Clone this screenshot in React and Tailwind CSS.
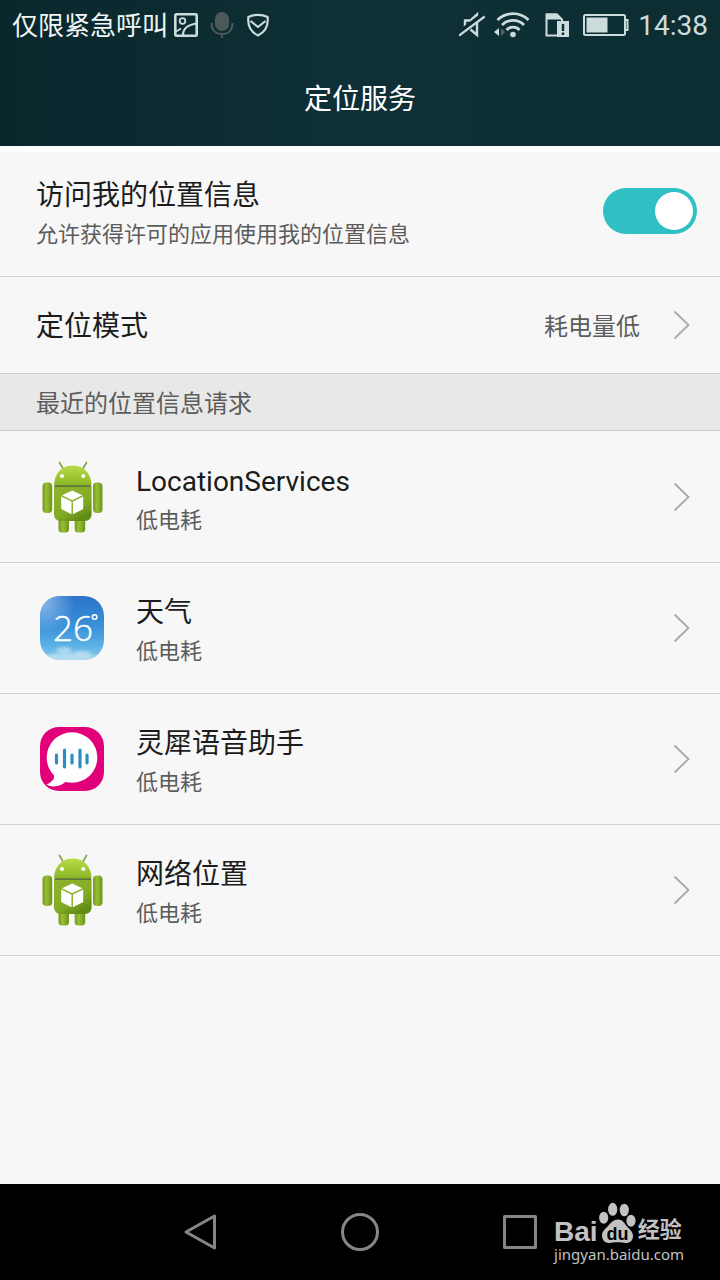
import { useState } from 'react';

const apps = [
  { name: 'LocationServices', usage: '低电耗', Icon: AndroidIcon },
  { name: '天气', usage: '低电耗', Icon: WeatherIcon },
  { name: '灵犀语音助手', usage: '低电耗', Icon: VoiceIcon },
  { name: '网络位置', usage: '低电耗', Icon: AndroidIcon },
];

function AndroidIcon() {
  return (
    <svg viewBox="0 0 72 72" className="size-18 shrink-0" aria-hidden="true">
      <defs>
        <linearGradient id="droidHead" x1="0" y1="0" x2="0" y2="1">
          <stop offset="0" stopColor="#b8dc48" />
          <stop offset="1" stopColor="#8db626" />
        </linearGradient>
        <linearGradient id="droidBody" x1="0" y1="0" x2="0.6" y2="1">
          <stop offset="0" stopColor="#8fb52c" />
          <stop offset="0.7" stopColor="#82ab24" />
          <stop offset="1" stopColor="#628b17" />
        </linearGradient>
        <linearGradient id="droidLimb" x1="0" y1="0" x2="1" y2="0">
          <stop offset="0" stopColor="#74991f" />
          <stop offset="0.4" stopColor="#97bf31" />
          <stop offset="1" stopColor="#6c9419" />
        </linearGradient>
      </defs>
      <path d="M23.5 1.5l4 7M50.5 1.5l-4 7" stroke="#8fa552" strokeWidth="1.8" strokeLinecap="round" />
      <rect x="22.5" y="52" width="10.5" height="19.5" rx="3.5" fill="url(#droidLimb)" />
      <rect x="38.7" y="52" width="10.5" height="19.5" rx="3.5" fill="url(#droidLimb)" />
      <rect x="6.5" y="21.5" width="9.7" height="30.5" rx="4" fill="url(#droidLimb)" />
      <rect x="57" y="21.5" width="9.5" height="30.5" rx="4" fill="url(#droidLimb)" />
      <path d="M18 25.500h37.600V53c0 4-2.500 7-6.600 7H24.600c-4 0-6.600-3-6.600-7z" fill="url(#droidBody)" />
      <path d="M18 24C18.500 12 26 4.500 36.800 4.500S55 12 55.600 24z" fill="url(#droidHead)" />
      <path d="M18.500 25h36.600" stroke="#3c5a0e" strokeWidth="1.3" />
      <circle cx="26" cy="15" r="2" fill="#fff" />
      <circle cx="47.3" cy="15" r="2" fill="#fff" />
      <path d="M36.2 29.6l10.200 4.700-10.200 5-10.200-5z" fill="#fff" />
      <path d="M25.200 35.500l10.300 5v12.800l-10.300-5.300zM47.200 35.500l-10.300 5v12.800l10.300-5.300z" fill="#fff" />
    </svg>
  );
}

function WeatherIcon() {
  return (
    <svg viewBox="-4 -4 72 72" className="size-18 shrink-0" aria-hidden="true">
      <defs>
        <linearGradient id="sky" x1="0" y1="0" x2="0" y2="1">
          <stop offset="0" stopColor="#2b72c8" />
          <stop offset="0.5" stopColor="#3b93da" />
          <stop offset="0.8" stopColor="#5fb3e6" />
          <stop offset="1" stopColor="#8fcbec" />
        </linearGradient>
        <radialGradient id="glow" cx="0.05" cy="0.1" r="0.5">
          <stop offset="0" stopColor="#9cc6ee" stopOpacity="0.8" />
          <stop offset="1" stopColor="#9cc6ee" stopOpacity="0" />
        </radialGradient>
        <clipPath id="weatherClip">
          <rect width="64" height="64" rx="20" />
        </clipPath>
        <filter id="cloudBlur">
          <feGaussianBlur stdDeviation="1.6" />
        </filter>
      </defs>
      <g clipPath="url(#weatherClip)">
        <rect width="64" height="64" fill="url(#sky)" />
        <rect width="64" height="64" fill="url(#glow)" />
        <g fill="#d9ecf6" filter="url(#cloudBlur)">
          <ellipse cx="24" cy="54" rx="8" ry="3" opacity="0.6" />
          <ellipse cx="42" cy="57" rx="9" ry="2.5" opacity="0.5" />
          <ellipse cx="30" cy="61" rx="26" ry="4" opacity="0.55" />
        </g>
      </g>
      <text x="13" y="45" fontSize="35" fontWeight="300" fill="#fff" stroke="#fff" strokeWidth="0.4" fontFamily="'Open Sans', 'Noto Sans', sans-serif">26</text>
      <circle cx="54.6" cy="21" r="2.3" fill="none" stroke="#fff" strokeWidth="1.5" />
    </svg>
  );
}

function VoiceIcon() {
  return (
    <svg viewBox="-4 -4 72 72" className="size-18 shrink-0" aria-hidden="true">
      <rect width="64" height="64" rx="19" fill="#e2007a" />
      <circle cx="32" cy="30.5" r="25.3" fill="#fff" />
      <path d="M14 46c1 5-1 9-7.500 11.500C12 61 21 59.500 26 54.500l6-3-10-8z" fill="#fff" />
      <g stroke="#2b8fc4" strokeWidth="3.2" strokeLinecap="round">
        <path d="M16.500 28v8M24.500 23v17M32 28v8M40 23v17M47 28v8" />
      </g>
    </svg>
  );
}

function Chevron() {
  return (
    <svg viewBox="0 0 18 30" className="h-[30px] w-[18px] shrink-0" fill="none" stroke="#a9a9a9" strokeWidth="1.8" aria-hidden="true">
      <path d="M1.500 1.500L15.500 15 1.500 28.500" />
    </svg>
  );
}

function StatusBar() {
  return (
    <div className="flex h-[50px] items-center justify-between px-3 text-[#ccdcdc]">
      <div className="flex items-center gap-[6px]">
        <span className="pt-0.5 text-[26px] leading-8 text-[#eef6f6]">仅限紧急呼叫</span>
        <svg viewBox="0 0 24 24" className="size-6" fill="none" stroke="currentColor" strokeWidth="2.6">
          <rect x="1.3" y="1.3" width="21.4" height="21.4" rx="1" />
          <circle cx="8.500" cy="8" r="2.8" strokeWidth="1.8" />
          <path d="M9 22c0-6 5-10.500 14-11.500" strokeWidth="2.2" />
          <path d="M2 18.500l5-3" strokeWidth="1.8" />
        </svg>
        <svg viewBox="0 0 24 28" className="ml-[6px] h-7 w-6" fill="none" stroke="#4d5959" strokeWidth="2">
          <rect x="5" y="1" width="14" height="19" rx="7" fill="#4d5959" stroke="none" />
          <path d="M1.500 12c0 7 4 11 10.500 11s10.500-4 10.500-11M12 23v4" />
        </svg>
        <svg viewBox="0 0 24 24" className="ml-[6px] size-6" fill="none" stroke="currentColor" strokeWidth="2.2" strokeLinejoin="round">
          <path d="M12 1.800c3.500 0 7 .9 9.600 2.200C22.600 12.500 19 19 12 22.500 5 19 1.400 12.500 2.400 4 5 2.700 8.500 1.800 12 1.800z" />
          <path d="M4.500 8l7.500 6L19.500 8" />
        </svg>
      </div>
      <div className="flex items-center">
        <svg viewBox="0 0 28 26" className="h-[26px] w-7" fill="none" stroke="currentColor">
          <path d="M6 16.500V8.500h5.500L18 2.500V23l-6.500-5.500" strokeWidth="2.4" />
          <path d="M0 21L24 3" stroke="#0d2c32" strokeWidth="5" />
          <path d="M0 23.500L25.700 4.500" strokeWidth="2.2" />
        </svg>
        <svg viewBox="0 0 38 26" className="ml-[6px] h-[26px] w-[38px]" fill="none" stroke="currentColor" strokeWidth="2.8">
          <path d="M4.500 8a22 22 0 0 1 31 0M9 13a15.500 15.500 0 0 1 22 0M13.500 18a9 9 0 0 1 13 0" />
          <circle cx="20" cy="22.500" r="2.8" fill="currentColor" stroke="none" />
          <path d="M6 16v8l-5-4z" fill="currentColor" stroke="none" />
          <path d="M8 16v8l4-4z" fill="#50686a" stroke="none" />
        </svg>
        <svg viewBox="0 0 24 26" className="ml-[14px] h-[26px] w-6" fill="none" stroke="currentColor" strokeWidth="2">
          <path d="M12 23.500H1.500V2.500H12l5 5V9" />
          <path d="M1 1.500h11l5.500 6H1z" fill="currentColor" stroke="none" />
          <rect x="12" y="9" width="12" height="16" fill="currentColor" stroke="none" />
          <path d="M18 12v7M18 20.500v2.500" stroke="#0d2c32" strokeWidth="2.4" />
        </svg>
        <svg viewBox="0 0 46 24" className="ml-[14px] h-6 w-[46px]" fill="none" stroke="currentColor" strokeWidth="2">
          <rect x="1" y="2" width="41" height="20" rx="1.5" />
          <rect x="3.500" y="4.500" width="21" height="15" fill="currentColor" stroke="none" />
          <path d="M43 7h1.500v10H43" />
        </svg>
        <span className="ml-[9px] pt-0.5 font-['Roboto',sans-serif] text-[28px] leading-8">14:38</span>
      </div>
    </div>
  );
}

function AppRow({ name, usage, Icon }) {
  return (
    <li className="border-b border-[#cfcfcf]">
      <button type="button" className="flex h-[130px] w-full items-center pr-[29px] pl-9 text-left">
        <Icon />
        <span className="ml-7 flex flex-1 flex-col gap-[3px] pt-[9px]">
          <span className="text-[28px] leading-9 text-[#1c1c1c]">{name}</span>
          <span className="text-[22px] leading-9 text-[#5c5c5c]">{usage}</span>
        </span>
        <Chevron />
      </button>
    </li>
  );
}

function Watermark() {
  return (
    <div className="absolute top-4 right-9 text-[#c2c2c2]">
      <div className="flex h-11 items-end font-bold">
        <span className="font-['Liberation_Sans',sans-serif] text-[28px] leading-6">Bai</span>
        <svg viewBox="0 0 38 42" className="h-[42px] w-[38px]" fill="currentColor" aria-hidden="true">
          <ellipse cx="5.7" cy="15.7" rx="4.6" ry="6" />
          <ellipse cx="14.7" cy="7.3" rx="4.6" ry="6.5" />
          <ellipse cx="26.3" cy="8" rx="4.6" ry="6.3" />
          <ellipse cx="33" cy="18.7" rx="4.6" ry="6" />
          <path d="M20 17.500c4.500 0 6.500 3.500 9 7 2.500 3 6 5 6 9.500s-3 7-7 7c-3 0-5-.7-8.500-.7s-5.500.7-8.500.7c-4 0-7-3-7-7.500s3-6 6-9.500c3-3.500 5.500-6.500 10-6.500z" />
          <text x="19.500" y="37.500" textAnchor="middle" fontSize="18" fill="#000" fontFamily="'Liberation Sans', sans-serif">du</text>
        </svg>
        <span className="ml-0.5 text-[22px] leading-7">经验</span>
      </div>
      <div className="font-['Noto_Sans',sans-serif] text-[15px] leading-5">jingyan.baidu.com</div>
    </div>
  );
}

export default function App() {
  const [enabled, setEnabled] = useState(true);

  return (
    <div className="flex min-h-screen flex-col bg-[#f7f7f7] font-['Roboto','Noto_Sans_CJK_SC',sans-serif]">
      <header className="bg-linear-to-r from-[#0a272c] via-[#0e3036] to-[#0c2d32]">
        <StatusBar />
        <h1 className="flex h-24 items-center justify-center pt-1 text-[28px] text-white">定位服务</h1>
      </header>

      <main className="flex-1">
        <label className="flex h-[131px] items-center justify-between border-t-6 border-b border-t-white border-b-[#cfcfcf] pr-[23px] pb-[6px] pl-9">
          <span className="flex flex-col gap-[3px] pt-[9px]">
            <span className="text-[28px] leading-9 text-[#1c1c1c]">访问我的位置信息</span>
            <span className="text-[22px] leading-9 text-[#5c5c5c]">允许获得许可的应用使用我的位置信息</span>
          </span>
          <input
            type="checkbox"
            role="switch"
            checked={enabled}
            onChange={(e) => setEnabled(e.target.checked)}
            className="h-[46px] w-[94px] appearance-none rounded-full bg-[#bdbdbd] p-1 before:block before:size-[38px] before:rounded-full before:bg-white checked:bg-[#30bfc3] checked:before:ml-12"
          />
        </label>

        <button type="button" className="flex h-[97px] w-full items-center border-b border-[#cfcfcf] pr-[29px] pl-9 text-left">
          <span className="flex-1 pt-1 text-[28px] text-[#1c1c1c]">定位模式</span>
          <span className="mr-[33px] pt-1 text-2xl text-[#5c5c5c]">耗电量低</span>
          <Chevron />
        </button>

        <h2 className="flex h-[57px] items-center border-b border-[#cfcfcf] bg-[#e8e8e8] pt-1 pl-9 text-2xl text-[#5c5c5c]">
          最近的位置信息请求
        </h2>

        <ul className="pt-px">
          {apps.map((app) => (
            <AppRow key={app.name} {...app} />
          ))}
        </ul>
      </main>

      <nav className="relative flex h-24 items-center justify-center gap-30 bg-black text-[#868686]">
        <button type="button" aria-label="返回">
          <svg viewBox="0 0 40 40" className="size-10" fill="none" stroke="currentColor" strokeWidth="3" strokeLinejoin="round">
            <path d="M34.500 4v32L6 20z" />
          </svg>
        </button>
        <button type="button" aria-label="主页">
          <svg viewBox="0 0 40 40" className="size-10" fill="none" stroke="currentColor" strokeWidth="3">
            <circle cx="20" cy="20" r="17.500" />
          </svg>
        </button>
        <button type="button" aria-label="最近任务">
          <svg viewBox="0 0 40 40" className="size-10" fill="none" stroke="currentColor" strokeWidth="3" strokeLinejoin="round">
            <rect x="4.500" y="4.500" width="31" height="31" />
          </svg>
        </button>
        <Watermark />
      </nav>
    </div>
  );
}
